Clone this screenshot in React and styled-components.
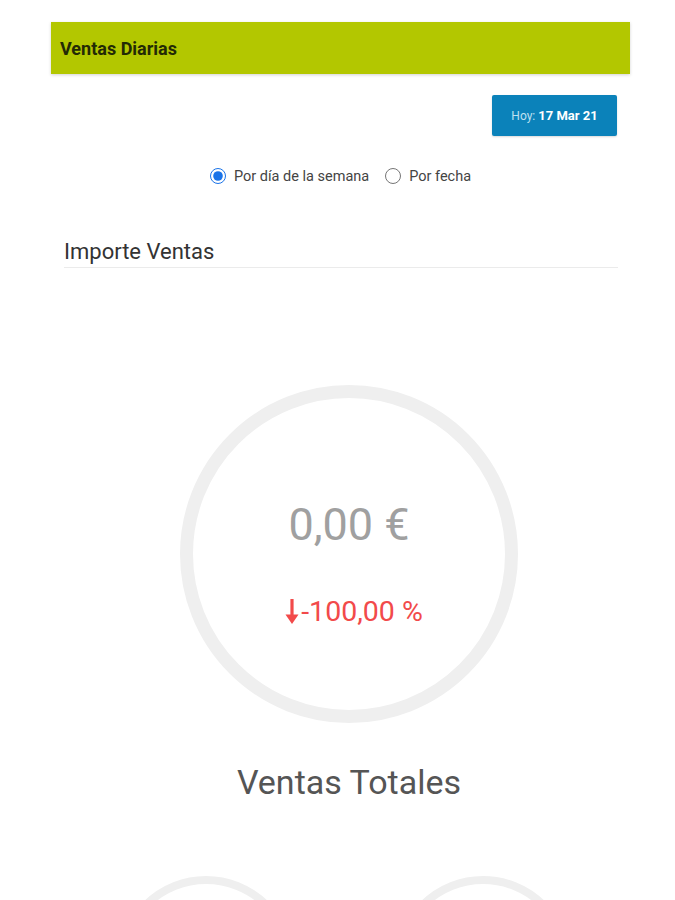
import React from "react";
import styled, { createGlobalStyle } from "styled-components";

const Global = createGlobalStyle`
  html, body { margin: 0; padding: 0; background: #fff; overflow: hidden; }
  body { font-family: Roboto, "Noto Sans", Arial, sans-serif; }
`;

const Page = styled.div`
  padding: 22px 45px 0 51px;
`;

const Header = styled.div`
  height: 52px;
  background: #b3c700;
  display: flex;
  align-items: center;
  padding-left: 9px;
  box-shadow: 0 1px 3px rgba(0, 0, 0, 0.18);
  font-size: 18px;
  font-weight: 700;
  color: #232a05;
`;

const Toolbar = styled.div`
  display: flex;
  justify-content: flex-end;
  margin-top: 21px;
  padding-right: 13px;
`;

const DateButton = styled.button`
  width: 125px;
  height: 41px;
  border: none;
  border-radius: 2px;
  background: #0b82ba;
  color: #fff;
  font-family: Roboto, Arial, sans-serif;
  font-size: 13px;
  font-weight: 700;
  display: flex;
  align-items: center;
  justify-content: center;
  gap: 3px;
  padding-right: 6px;
  box-shadow: 0 1px 2px rgba(0, 0, 0, 0.15);
`;

const Light = styled.span`
  font-weight: 400;
  color: #bfe0f0;
  font-size: 12px;
`;

const RadioRow = styled.div`
  display: flex;
  justify-content: center;
  align-items: center;
  gap: 16px;
  margin-top: 30px;
  height: 20px;
`;

const RadioLabel = styled.label`
  display: flex;
  align-items: center;
  gap: 8px;
  font-size: 14.5px;
  color: #444;
`;

const Radio = styled.input`
  width: 16px;
  height: 16px;
  margin: 0;
  accent-color: #1a73e8;
`;

const SectionTitle = styled.div`
  margin: 53px 12px 0 13px;
  font-size: 22px;
  line-height: 25px;
  color: #333;
  padding-bottom: 3px;
  border-bottom: 1px solid #ebebeb;
`;

const Center = styled.div`
  display: flex;
  justify-content: center;
  padding-left: 17px;
  margin-top: ${(p) => p.$top}px;
`;

const Ring = styled.div`
  box-sizing: border-box;
  width: ${(p) => p.$size}px;
  height: ${(p) => p.$size}px;
  border-radius: 50%;
  border: ${(p) => p.$stroke}px solid #efefef;
  display: flex;
  flex-direction: column;
  align-items: center;
  justify-content: center;
  padding-top: 19px;
`;

const Value = styled.div`
  font-size: 45px;
  line-height: 50px;
  color: #a0a0a0;
`;

const Delta = styled.div`
  margin-top: 46px;
  margin-left: 10px;
  display: flex;
  align-items: center;
  gap: 2px;
  font-size: 28.5px;
  line-height: 32px;
  color: #f24a4a;
`;

const Title = styled.div`
  font-size: 34px;
  line-height: 40px;
  color: #555;
`;

const Pair = styled.div`
  display: grid;
  grid-template-columns: 1fr 1fr;
  margin-top: 74px;
  padding: 0 9px 0 17px;
  justify-items: center;
`;

const Arrow = () => (
  <svg width="14" height="27" viewBox="0 0 14 27">
    <path d="M7 1 V22" stroke="#f24a4a" strokeWidth="3.2" fill="none" />
    <path d="M0.5 16.5 L7 26 L13.5 16.5 Z" fill="#f24a4a" />
  </svg>
);

export default function App() {
  return (
    <>
      <Global />
      <Page>
        <Header>Ventas Diarias</Header>
        <Toolbar>
          <DateButton>
            <Light>Hoy:</Light> 17 Mar 21
          </DateButton>
        </Toolbar>
        <RadioRow>
          <RadioLabel>
            <Radio type="radio" name="modo" defaultChecked />
            Por día de la semana
          </RadioLabel>
          <RadioLabel>
            <Radio type="radio" name="modo" />
            Por fecha
          </RadioLabel>
        </RadioRow>
        <SectionTitle>Importe Ventas</SectionTitle>
        <Center $top={117}>
          <Ring $size={338} $stroke={13}>
            <Value>0,00 €</Value>
            <Delta>
              <Arrow />
              -100,00 %
            </Delta>
          </Ring>
        </Center>
        <Center $top={39}>
          <Title>Ventas Totales</Title>
        </Center>
        <Pair>
          <Ring $size={178} $stroke={8} />
          <Ring $size={178} $stroke={8} />
        </Pair>
      </Page>
    </>
  );
}
